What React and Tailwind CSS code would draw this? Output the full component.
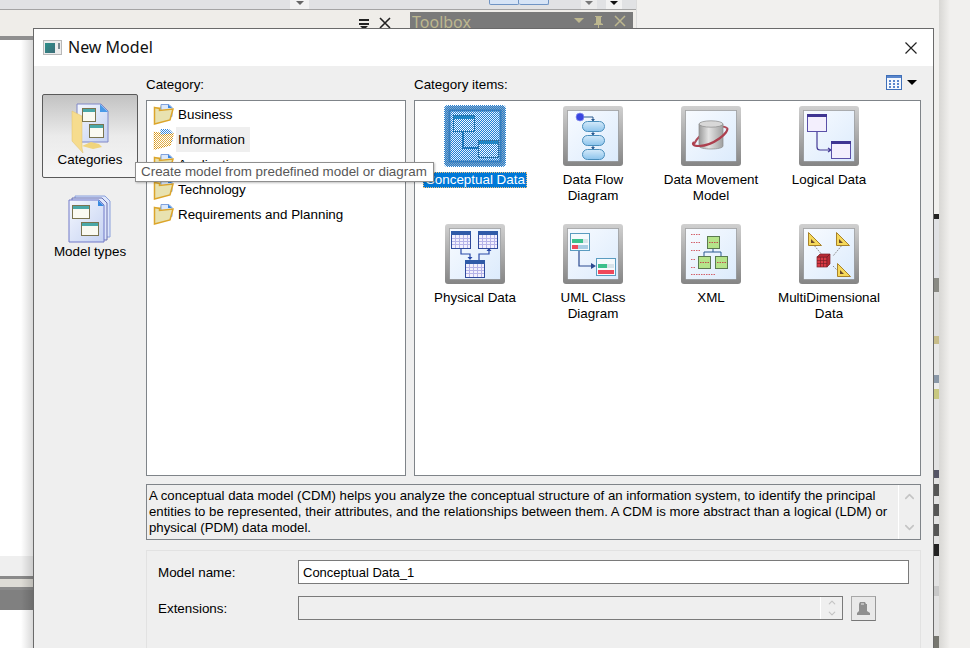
import { ChevronUp, ChevronDown } from 'lucide-react';

const categories = [
  { label: 'Business' },
  { label: 'Information', active: true },
  { label: 'Application' },
  { label: 'Technology' },
  { label: 'Requirements and Planning' },
];

function Defs() {
  return (
    <svg width="0" height="0" className="absolute">
      <defs>
        <linearGradient id="frame" x1="0" y1="0" x2="0" y2="1">
          <stop offset="0" stopColor="#d0d0d0" />
          <stop offset="1" stopColor="#858585" />
        </linearGradient>
        <linearGradient id="inner" x1="0" y1="0" x2="1" y2="1">
          <stop offset="0" stopColor="#f8fbff" />
          <stop offset="1" stopColor="#dcebfc" />
        </linearGradient>
        <linearGradient id="pill" x1="0" y1="0" x2="0" y2="1">
          <stop offset="0" stopColor="#d5eafa" />
          <stop offset="1" stopColor="#8cc4ec" />
        </linearGradient>
        <linearGradient id="cyl" x1="0" y1="0" x2="1" y2="0">
          <stop offset="0" stopColor="#9a9a9a" />
          <stop offset="0.4" stopColor="#e4e4e4" />
          <stop offset="1" stopColor="#a0a0a0" />
        </linearGradient>
        <linearGradient id="sheet" x1="0" y1="0" x2="1" y2="1">
          <stop offset="0" stopColor="#f4f7fe" />
          <stop offset="1" stopColor="#c5d2f2" />
        </linearGradient>
        <linearGradient id="titleicon" x1="0" y1="0" x2="1" y2="1">
          <stop offset="0" stopColor="#2d8f8a" />
          <stop offset="1" stopColor="#3d6d78" />
        </linearGradient>
        <pattern id="dither" width="2" height="2" patternUnits="userSpaceOnUse">
          <rect x="0" y="0" width="1" height="1" fill="#1f7fd4" />
          <rect x="1" y="1" width="1" height="1" fill="#1f7fd4" />
        </pattern>
        <pattern id="ditherlight" width="2" height="2" patternUnits="userSpaceOnUse">
          <rect x="0" y="0" width="1" height="1" fill="#ffffff" />
          <rect x="1" y="1" width="1" height="1" fill="#ffffff" />
        </pattern>
      </defs>
    </svg>
  );
}

function Tile({ children, selected }) {
  return (
    <svg width="60" height="60" viewBox="0 0 60 60" className="block overflow-visible">
      <rect width="60" height="60" rx="3" fill={selected ? '#8fa8c0' : 'url(#frame)'} />
      <rect
        x="4.5"
        y="4.5"
        width="51"
        height="51"
        fill="url(#inner)"
        stroke={selected ? '#4a7aa8' : '#777'}
        strokeOpacity={selected ? 1 : 0.5}
        strokeWidth={selected ? 2 : 1}
      />
      {children}
      {selected && <rect x="-1" y="-1" width="62" height="62" rx="4" fill="url(#dither)" />}
    </svg>
  );
}

function ConceptualIcon() {
  return (
    <Tile selected>
      <path d="M18 25v17h15" fill="none" stroke="#1f6f9c" strokeWidth="2" />
      <rect x="8.5" y="9.5" width="21" height="16" fill="#ffffff" stroke="#2f6f8c" />
      <rect x="9" y="10" width="20" height="3" fill="#1f8db5" />
      <rect x="33.5" y="34.5" width="20" height="17" fill="#ffffff" stroke="#3f6a7c" />
      <rect x="34" y="35" width="19" height="3" fill="#1f8db5" />
    </Tile>
  );
}

function DataFlowIcon() {
  return (
    <Tile>
      <path d="M20 11h10v4M30 25v4M30 39v4" fill="none" stroke="#2a5a90" strokeWidth="1" />
      <path d="M28 13h4l-2 2.500zM28 27h4l-2 2.500zM28 41h4l-2 2.500z" fill="#2a5a90" />
      <rect x="19.500" y="15.500" width="22" height="10" rx="5" fill="url(#pill)" stroke="#4a8ebc" />
      <rect x="19.500" y="29.500" width="22" height="10" rx="5" fill="url(#pill)" stroke="#4a8ebc" />
      <rect x="19.500" y="43.500" width="22" height="10" rx="5" fill="url(#pill)" stroke="#4a8ebc" />
      <circle cx="17" cy="11" r="4" fill="#3a45e0" stroke="#8e97ee" strokeWidth="0.7" />
    </Tile>
  );
}

function DataMovementIcon() {
  return (
    <Tile>
      <path d="M13 38C20 24 40 18 46 22" fill="none" stroke="#b04a58" strokeWidth="2" />
      <path d="M18 18v22c0 4 24 4 24 0V18z" fill="url(#cyl)" stroke="#8a8a8a" strokeWidth="0.7" />
      <ellipse cx="30" cy="18" rx="12" ry="3.200" fill="#d8d8d8" stroke="#8a8a8a" strokeWidth="0.7" />
      <path d="M46 22C49 26 32 40 18 40C12 40 11 38 13 36" fill="none" stroke="#ad3f4e" strokeWidth="2.200" />
    </Tile>
  );
}

function LogicalIcon() {
  return (
    <Tile>
      <path d="M18 25v16q0 3 3 3h11M29 42l3 2-3 2" fill="none" stroke="#453a96" strokeWidth="1.200" />
      <rect x="8.500" y="8.500" width="19" height="17" fill="#f3effd" stroke="#5a50a8" />
      <rect x="8" y="8" width="20" height="3" fill="#3f3592" />
      <rect x="32.500" y="35.500" width="19" height="17" fill="#f3effd" stroke="#5a50a8" />
      <rect x="32" y="35" width="20" height="3" fill="#3f3592" />
    </Tile>
  );
}

function MiniTable({ x, y }) {
  const cols = [4, 8, 12, 16];
  const rows = [7, 10, 13];
  return (
    <g transform={`translate(${x} ${y})`}>
      <rect x="0.500" y="0.500" width="19" height="17" fill="#f2f0fd" stroke="#2f4a9c" />
      <rect width="20" height="4" fill="#2f5aa8" />
      {cols.map(c => <path key={c} d={`M${c + 0.5} 4v13`} stroke="#b5b3e8" strokeWidth="1" />)}
      {rows.map(r => <path key={r} d={`M1 ${r + 0.5}h18`} stroke="#b5b3e8" strokeWidth="1" />)}
    </g>
  );
}

function PhysicalIcon() {
  return (
    <Tile>
      <path d="M16 24v6h9v4M34 36v-6h10v-4" fill="none" stroke="#2a4aa8" strokeWidth="1.200" />
      <path d="M22.500 33h5l-2.500 3zM41.500 27h5L44 24z" fill="#2a4aa8" />
      <MiniTable x={6} y={7} />
      <MiniTable x={33} y={7} />
      <MiniTable x={20} y={36} />
    </Tile>
  );
}

function UmlIcon() {
  return (
    <Tile>
      <path d="M16 26v16h13" fill="none" stroke="#2a4a90" strokeWidth="1.200" />
      <path d="M28 39l5 3-5 3z" fill="#2a4a90" />
      <rect x="7.500" y="9.500" width="19" height="17" fill="#f5fafd" stroke="#5a9cc0" />
      <rect x="9" y="15" width="11" height="4" fill="#3cc08c" />
      <rect x="20" y="15" width="5" height="4" fill="#d8e4ea" />
      <rect x="9" y="21" width="6" height="4" fill="#f0485a" />
      <rect x="15" y="21" width="10" height="4" fill="#a8cce4" />
      <rect x="33.500" y="34.500" width="19" height="17" fill="#f5fafd" stroke="#5a9cc0" />
      <rect x="35" y="40" width="9" height="4" fill="#3cc08c" />
      <rect x="44" y="40" width="7" height="4" fill="#d8e4ea" />
      <rect x="35" y="46" width="16" height="4" fill="#f0485a" />
    </Tile>
  );
}

function XmlIcon() {
  const boxes = [[26, 12], [17, 32], [34, 32]];
  const marks = ['M10 10.500h10', 'M10 18.500h10', 'M10 26.500h10', 'M10 35.500h5', 'M10 43.500h5', 'M10 50.500h25'];
  return (
    <Tile>
      {marks.map(d => <path key={d} d={d} stroke="#d2606a" strokeWidth="1" strokeDasharray="1.500 1" />)}
      <path d="M32 24v4M23 32v-4h17v4" fill="none" stroke="#2a5a90" strokeWidth="1" />
      {boxes.map(([x, y]) => (
        <g key={x}>
          <rect x={x + 0.5} y={y + 0.5} width="12" height="12" fill="#b5e48a" stroke="#5a7a50" />
          <path d={`M${x + 2} ${y + 6.5}h9`} stroke="#c0504a" strokeWidth="1" strokeDasharray="1.500 1" />
        </g>
      ))}
    </Tile>
  );
}

function SetSquare({ x, y }) {
  return (
    <g transform={`translate(${x} ${y})`}>
      <path d="M0.500 0.500L13.500 13.500H0.500z" fill="#f5d85a" stroke="#a8822a" />
      <path d="M3 7L7 11H3z" fill="#6a4a2a" />
    </g>
  );
}

function MultiIcon() {
  return (
    <Tile>
      <path d="M14 20L24 32M44 20L34 32M34 42L41 49" stroke="#8a8a8a" strokeWidth="1" strokeDasharray="1.500 1" />
      <SetSquare x={9} y={8} />
      <SetSquare x={37} y={8} />
      <SetSquare x={38} y={39} />
      <rect x="18" y="33" width="10" height="10" fill="#d83a44" stroke="#7a2028" strokeWidth="0.700" />
      <path d="M18 33l3-3h10l-3 3zM28 33l3-3v10l-3 3z" fill="#b82a34" stroke="#7a2028" strokeWidth="0.700" />
      <path d="M21.500 33v10M24.500 33v10M18 36.500h10M18 39.500h10" stroke="#7a2028" strokeWidth="0.700" />
    </Tile>
  );
}

function FolderIcon({ dithered }) {
  return (
    <svg width="22" height="22" viewBox="0 0 22 22" className="shrink-0 self-start mt-px">
      <path d="M2 4.500h5l1-2h3v4H2z" fill="#e5b22e" />
      <path d="M8 1.500h8l3 3v9H8z" fill={dithered ? '#2f86e0' : '#dbe8fb'} stroke={dithered ? '#2f86e0' : '#7fa2de'} />
      <path d="M15 1.500l4 3.500h-4z" fill="#3a86e0" />
      <path
        d="M1.500 4.500l5 1v2l13.500-1.500-3 11-15.500 4z"
        fill={dithered ? '#e3b04a' : '#e8e2b0'}
        stroke={dithered ? '#d8920a' : '#dca52a'}
        strokeWidth="1.500"
      />
      {dithered && <rect width="22" height="22" fill="url(#ditherlight)" />}
    </svg>
  );
}

function WinBox({ x, y, w = 13, h = 14 }) {
  return (
    <g>
      <rect x={x + 0.5} y={y + 0.5} width={w} height={h} fill="#fafaf2" stroke="#7a7450" />
      <rect x={x + 1} y={y + 1} width={w - 1} height="3" fill="#4aa8a8" />
    </g>
  );
}

function CategoriesIcon() {
  return (
    <svg width="38" height="50" viewBox="0 0 38 50">
      <path d="M6 1h24l7 7v31H6z" fill="url(#sheet)" stroke="#8088c8" />
      <path d="M29 1l8 8h-8z" fill="#4a9ae8" />
      <path d="M1 8L11 13V45L12 50 1 38z" fill="#f6dc8e" stroke="#e2c06a" strokeWidth="0.500" />
      <path d="M11 43l9-4 8 2 3 3-9 2z" fill="#f0d47c" />
      <WinBox x={11} y={5} w={13} h={13} />
      <WinBox x={18} y={21} w={14} h={13} />
    </svg>
  );
}

function ModelTypesIcon() {
  return (
    <svg width="44" height="48" viewBox="0 0 44 48">
      <path d="M7 1h30l5 5v36H7z" fill="#dde6fb" stroke="#8aa0dc" />
      <path d="M4 3h30l5 5v37H4z" fill="#dde6fb" stroke="#6a70b0" />
      <path d="M1 5h30l5 5v37H1z" fill="url(#sheet)" stroke="#7078c8" />
      <path d="M30 5l6 6h-6z" fill="#3a8ae0" />
      <WinBox x={4} y={10} w={17} h={13} />
      <WinBox x={13} y={27} w={17} h={13} />
    </svg>
  );
}

function ViewIcon() {
  return (
    <svg width="16" height="15" viewBox="0 0 16 15">
      <rect x="0.500" y="0.500" width="15" height="14" fill="#f4f8fe" stroke="#3f6fb8" />
      <rect x="1" y="1" width="14" height="2" fill="#5a86cc" />
      {[3, 7, 11].map(x => [5, 8, 11].map(y => <rect key={`${x}-${y}`} x={x} y={y} width="2" height="2" fill="#5a86cc" />))}
    </svg>
  );
}

function DialogIcon() {
  return (
    <svg width="19" height="15" viewBox="0 0 19 15">
      <rect x="0.500" y="0.500" width="18" height="14" fill="#ececec" stroke="#b8b8b8" />
      <rect x="2" y="3" width="10" height="10" fill="url(#titleicon)" />
      <rect x="15" y="3" width="2" height="6" fill="#7a8a90" />
    </svg>
  );
}

function BrowseIcon() {
  return (
    <svg width="13" height="13" viewBox="0 0 13 13">
      <path d="M3 0h5l1 2h1v7l3 2v2H0v-2l2-2V2z" fill="#8f8f8f" />
      <path d="M4 1h3v2H4z" fill="#bdbdbd" />
    </svg>
  );
}

function CategoryItem({ icon, label, selected }) {
  return (
    <div className="flex flex-col items-center w-[118px] h-[118px] pt-[5px]">
      {icon}
      <span className={`mt-[6px] text-center leading-[16px] whitespace-pre-line ${selected ? 'px-[2px] bg-[#0078d7] text-white outline-1 outline-dotted outline-[#f5c27a] -outline-offset-1' : ''}`}>
        {label}
      </span>
    </div>
  );
}

// strip of the app window that shows right of the dialog
const stripBands = [
  ['h-[214px]', 'bg-[#f1f0ee]'],
  ['h-[5px]', 'bg-[#222]'],
  ['h-[59px]', 'bg-[#e0e1e4]'],
  ['h-[14px]', 'bg-[#8a8a84]'],
  ['h-[44px]', 'bg-[#dedede]'],
  ['h-[8px]', 'bg-[#c8bd8a]'],
  ['h-[31px]', 'bg-[#e8e8e8]'],
  ['h-[8px]', 'bg-[#8a98a8]'],
  ['h-[6px]', 'bg-[#ececec]'],
  ['h-[10px]', 'bg-[#c8c880]'],
  ['h-[71px]', 'bg-[#e2e2e2]'],
  ['h-[8px]', 'bg-[#556]'],
  ['h-[6px]', 'bg-[#e2e2e2]'],
  ['h-[12px]', 'bg-[#555]'],
  ['h-[8px]', 'bg-[#e2e2e2]'],
  ['h-[12px]', 'bg-[#555]'],
  ['h-[8px]', 'bg-[#e2e2e2]'],
  ['h-[12px]', 'bg-[#555]'],
  ['h-[8px]', 'bg-[#e2e2e2]'],
  ['h-[12px]', 'bg-[#222]'],
  ['h-[30px]', 'bg-[#e2e2e2]'],
  ['h-[10px]', 'bg-[#c8c8c8]'],
  ['h-[40px]', 'bg-[#e2e2e2]'],
  ['flex-1', 'bg-[#777770]'],
];

function AppBackdrop() {
  return (
    <>
      <div className="absolute left-0 top-0 w-[637px] h-full flex flex-col bg-white border-r border-r-[#dcdcdc]">
        <div className="h-[10px] bg-[#e1e2e4] border-b-[1px] border-b-[#a4a4a4] flex shrink-0 relative">
          <div className="absolute left-[290px] top-0 w-[19px] h-[9px] bg-[#f2f2f2] flex justify-center">
            <div className="w-0 h-0 mt-[1px] border-x-[4px] border-x-transparent border-t-[4px] border-t-[#666]" />
          </div>
          <div className="absolute left-[489px] top-0 w-[30px] h-[5px] bg-[#d6e4f6] border-x border-b border-[#6f94c4] rounded-b-[2px]" />
          <div className="absolute left-[519px] top-0 w-[30px] h-[5px] bg-[#d6e4f6] border-r border-b border-[#6f94c4] rounded-b-[2px]" />
          <div className="absolute left-[581px] top-0 w-[16px] h-[9px] bg-[#ececec] flex justify-center">
            <div className="w-0 h-0 mt-[1px] border-x-[4px] border-x-transparent border-t-[4px] border-t-[#777]" />
          </div>
          <div className="absolute left-[606px] top-0 w-[16px] h-[9px] bg-[#f2f2f2] flex justify-center">
            <div className="w-0 h-0 mt-[1px] border-x-[4px] border-x-transparent border-t-[4px] border-t-[#111]" />
          </div>
        </div>
        <div className="h-[30px] bg-[#efede9] flex shrink-0 border-b-[4px] border-b-[#8f8f8f] pr-[3px]">
          <div className="flex-1 flex justify-end items-start pr-[19px] pt-[4px] gap-[9px]">
            <svg width="12" height="14" viewBox="0 0 12 14" className="mt-[3px]"><path d="M1 2h10v2H1zM1 6h10v2H1zM2 9h8l-4 4z" fill="#222" /></svg>
            <svg width="12" height="12" viewBox="0 0 12 12" className="mt-[3px]"><path d="M1 1l10 10M11 1L1 11" stroke="#222" strokeWidth="1.600" /></svg>
          </div>
          <div className="w-[223px] h-[17px] mt-[2px] bg-[#7a7a7a] text-[#bdb78f] flex items-start overflow-hidden">
            <span className="ml-[2px] text-[16px] leading-[21px] font-['Noto_Sans',sans-serif]">Toolbox</span>
            <svg width="56" height="14" viewBox="0 0 56 14" className="ml-auto mr-[3px] mt-[3px]">
              <path d="M0 3h10l-5 5z" fill="#bdb78f" />
              <path d="M21 1h7v1h-1v6l2 1v1h-4v4h-1v-4h-4V9l2-1V2h-1z" fill="#bdb78f" />
              <path d="M41 1l10 10M51 1L41 11" stroke="#bdb78f" strokeWidth="1.500" />
            </svg>
          </div>
        </div>
        <div className="flex-1 bg-white" />
        <div className="h-[20px] bg-[#efefef] shrink-0" />
        <div className="h-[14px] shrink-0 bg-[#dedcd6] border-y-[3px] border-y-[#8a8a8a]" />
        <div className="h-[20px] bg-[#808080] shrink-0" />
        <div className="h-[38px] bg-white shrink-0" />
      </div>
      <div className="absolute left-[934px] top-0 w-[36px] h-full flex">
        <div className="w-[5px] h-full flex flex-col">
          {stripBands.map(([height, color], i) => (
            <div key={i} className={`${height} ${color} shrink-0`} />
          ))}
        </div>
        <div className="w-[11px] h-full bg-gradient-to-r from-[#d8d7d4] to-[#f1f0ee]" />
      </div>
      <div className="absolute left-[21px] top-[40px] bottom-0 w-[12px] bg-gradient-to-r from-transparent to-black/15" />
    </>
  );
}

export default function App() {
  return (
    <div className="relative w-[970px] h-[648px] overflow-hidden bg-[#f1f0ee] text-[13.4px] text-black font-['Liberation_Sans',Arial,sans-serif]">
      <Defs />
      <AppBackdrop />

      <div className="absolute left-[33px] top-[28px] w-[901px] h-[640px] border border-[#6a6a6a] bg-[#efefef] flex flex-col">
        <div className="h-[37px] bg-white flex items-center pl-[9px] pr-[15px] shrink-0">
          <DialogIcon />
          <span className="ml-[6px] pb-[2px] text-[16px] text-[#111] font-['Noto_Sans',sans-serif]">New Model</span>
          <svg width="14" height="14" viewBox="0 0 14 14" className="ml-auto">
            <path d="M1.500 1.500l11 11M12.500 1.500l-11 11" stroke="#222" strokeWidth="1.200" />
          </svg>
        </div>

        <div className="flex-1 flex pl-[8px] pr-[12px]">
          <div className="w-[96px] shrink-0 pt-[28px] flex flex-col">
            <div className="h-[84px] rounded-[2px] border border-[#5a5a5a] bg-gradient-to-b from-[#c2c2c2] via-[#ebebeb] to-[#f6f6f6] flex flex-col items-center pt-[8px]">
              <CategoriesIcon />
              <span className="leading-[16px] mt-[-1px]">Categories</span>
            </div>
            <div className="flex flex-col items-center pt-[17px]">
              <ModelTypesIcon />
              <span className="leading-[16px] mt-[1px]">Model types</span>
            </div>
          </div>

          <div className="flex-1 ml-[8px] flex flex-col min-w-0">
            <div className="flex h-[34px] shrink-0 items-end pb-[7px]">
              <span className="w-[268px] leading-[16px]">Category:</span>
              <span className="leading-[16px]">Category items:</span>
              <div className="ml-auto flex items-center gap-[5px] mr-[4px] mb-[3px]">
                <ViewIcon />
                <div className="w-0 h-0 border-x-[5px] border-x-transparent border-t-[5px] border-t-black" />
              </div>
            </div>

            <div className="flex h-[376px] shrink-0 gap-[8px]">
              <div className="w-[260px] shrink-0 bg-white border border-[#7f8489] pt-px pl-[6px]">
                {categories.map(c => (
                  <div key={c.label} className="flex items-center h-[25px]">
                    <FolderIcon dithered={c.active} />
                    <span className={`ml-px px-[2px] h-[25px] leading-[25px] ${c.active ? 'bg-[#efefef] pr-[5px]' : ''}`}>{c.label}</span>
                  </div>
                ))}
              </div>
              <div className="flex-1 bg-white border border-[#7f8489] pl-px grid grid-cols-[repeat(4,118px)] content-start">
                <CategoryItem icon={<ConceptualIcon />} label="Conceptual Data" selected />
                <CategoryItem icon={<DataFlowIcon />} label={'Data Flow\nDiagram'} />
                <CategoryItem icon={<DataMovementIcon />} label={'Data Movement\nModel'} />
                <CategoryItem icon={<LogicalIcon />} label="Logical Data" />
                <CategoryItem icon={<PhysicalIcon />} label="Physical Data" />
                <CategoryItem icon={<UmlIcon />} label={'UML Class\nDiagram'} />
                <CategoryItem icon={<XmlIcon />} label="XML" />
                <CategoryItem icon={<MultiIcon />} label={'MultiDimensional\nData'} />
              </div>
            </div>

            <div className="mt-[8px] h-[56px] shrink-0 border border-[#7f8489] flex bg-[#efefef]">
              <p className="flex-1 pl-[2px] pt-[3px] text-[13.2px] leading-[16px] whitespace-nowrap">
                A conceptual data model (CDM) helps you analyze the conceptual structure of an information system, to identify the principal<br />
                entities to be represented, their attributes, and the relationships between them. A CDM is more abstract than a logical (LDM) or<br />
                physical (PDM) data model.
              </p>
              <div className="w-[22px] border-l border-l-white flex flex-col items-center justify-between py-[4px] text-[#c4c4c4]">
                <ChevronUp size={15} strokeWidth={2.5} />
                <ChevronDown size={15} strokeWidth={2.5} />
              </div>
            </div>

            <div className="mt-[10px] flex-1 border border-[#e2e2e2] flex flex-col pl-[11px] pr-[11px] pt-[9px] gap-[12px]">
              <div className="flex items-center h-[24px]">
                <span className="w-[140px] shrink-0 pt-[2px]">Model name:</span>
                <div className="flex-1 h-[24px] bg-white border border-[#7a7a7a] pl-[4px] text-[13px] leading-[23px]">Conceptual Data_1</div>
              </div>
              <div className="flex items-center h-[24px]">
                <span className="w-[140px] shrink-0 pt-[2px]">Extensions:</span>
                <div className="w-[545px] h-[24px] border border-[#7a7a7a] flex justify-end">
                  <div className="w-[22px] border-l border-l-white flex flex-col items-center justify-center text-[#c4c4c4]">
                    <ChevronUp size={12} strokeWidth={2.5} />
                    <ChevronDown size={12} strokeWidth={2.5} />
                  </div>
                </div>
                <div className="ml-[8px] w-[25px] h-[25px] border border-[#a8a8a8] border-b-[#777] border-r-[#999] bg-[#e9e9e9] flex items-center justify-center">
                  <BrowseIcon />
                </div>
              </div>
            </div>
          </div>
        </div>
      </div>

      <div className="absolute left-[135px] top-[162px] w-[299px] h-[20px] bg-white border border-[#8f8f8f] shadow-[1px_1px_2px_rgba(0,0,0,0.25)] text-[#575757] leading-[18px] pl-[5px] whitespace-nowrap">
        Create model from predefined model or diagram
      </div>
    </div>
  );
}
